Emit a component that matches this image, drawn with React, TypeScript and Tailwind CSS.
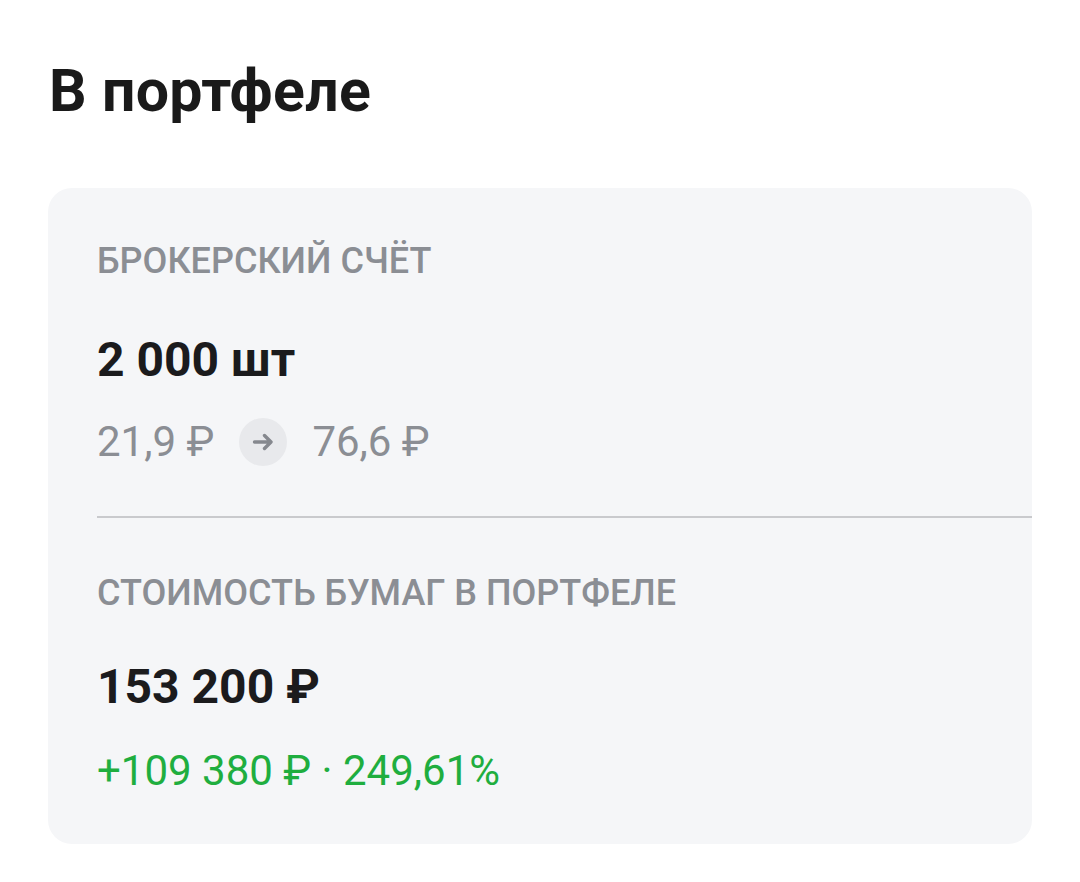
import React from 'react';

const font = { fontFamily: 'Roboto, "Noto Sans", sans-serif' };

function Label({ children }: { children: React.ReactNode }) {
  return (
    <div className="h-[40px] leading-[40px] text-[36px] font-medium text-[#8b8e94]">
      {children}
    </div>
  );
}

function Amount({ children }: { children: React.ReactNode }) {
  return (
    <div className="h-[56px] leading-[56px] text-[48px] font-bold text-[#1b1b1d]">
      {children}
    </div>
  );
}

function Arrow() {
  return (
    <svg width="24" height="24" viewBox="0 0 24 24" fill="none" className="text-[#85888e]">
      <path d="M3.5 12h16M13.5 5.5l6.5 6.5-6.5 6.5" stroke="currentColor" strokeWidth="3.4" strokeLinecap="round" strokeLinejoin="round" />
    </svg>
  );
}

export default function App() {
  return (
    <div className="min-h-[882px] w-[1080px] bg-white px-[48px]" style={font}>
      <h1 className="pt-[56px] h-[126px] leading-[70px] text-[59px] font-bold text-[#1a1a1a] pl-[1px] tracking-[0.3px]">
        В портфеле
      </h1>

      <div className="mt-[62px] rounded-[24px] bg-[#f5f6f8] pl-[49px] pt-[53px] pb-[49px]">
        <Label>БРОКЕРСКИЙ СЧЁТ</Label>

        <div className="mt-[51px]">
          <Amount>2 000 шт</Amount>
        </div>

        <div className="mt-[30px] flex h-[48px] items-center gap-[25px] text-[42px] leading-[48px] text-[#8b8e94]">
          <span>21,9 ₽</span>
          <span className="flex h-[48px] w-[48px] items-center justify-center rounded-full bg-[#e8e9ec]">
            <Arrow />
          </span>
          <span>76,6 ₽</span>
        </div>

        <div className="mt-[50px] h-[2px] bg-[#c9cacd]" />

        <div className="mt-[55px]">
          <Label>СТОИМОСТЬ БУМАГ В ПОРТФЕЛЕ</Label>
        </div>

        <div className="mt-[46px]">
          <Amount>153 200 ₽</Amount>
        </div>

        <div className="mt-[32px] h-[48px] leading-[48px] text-[42px] text-[#1fae3f]">
          +109 380 ₽ · 249,61%
        </div>
      </div>
    </div>
  );
}
